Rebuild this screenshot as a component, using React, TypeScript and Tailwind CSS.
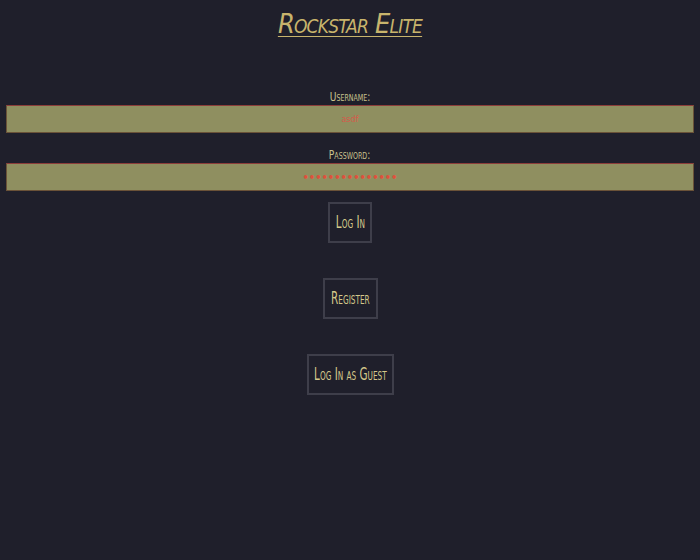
import React from "react";

const font = { fontFamily: '"Liberation Sans Narrow", "DejaVu Sans Condensed", "Roboto Condensed", "Liberation Sans", sans-serif' };

const btn =
  "h-[41px] flex items-center justify-center border-2 border-[#3e3e4a] text-[17px] text-[#d4c88a] [font-variant:small-caps] whitespace-nowrap";

function Btn({ w, children }: { w: string; children: React.ReactNode }) {
  return (
    <button className={`${btn} ${w}`}>
      <span className="inline-block scale-x-[0.68]">{children}</span>
    </button>
  );
}

export default function App() {
  return (
    <div className="w-[700px] h-[560px] bg-[#1f1f2b] flex flex-col items-center text-[#c9c28e]" style={font}>
      <h1 className="mt-[7px] text-[27px] leading-[34px] italic underline underline-offset-[3px] decoration-1 text-[#c8b46c] [font-variant:small-caps] tracking-[-0.8px]">
        Rockstar Elite
      </h1>
      <div className="mt-[49px] w-full flex flex-col items-center px-[6px]">
        <label className="text-[13px] leading-[14px] [font-variant:small-caps] inline-block scale-x-[0.78]">Username:</label>
        <input
          readOnly
          value="asdf"
          className="mt-[1px] w-full h-[28px] bg-[#8f8f60] border border-[#6a5238] border-t-[#8c3d3a] text-center text-[9px] text-[#d65a4a] outline-none"
        />
        <label className="mt-[15px] text-[13px] leading-[14px] [font-variant:small-caps] inline-block scale-x-[0.78]">Password:</label>
        <input
          readOnly
          type="password"
          value="passwordpasswor"
          className="mt-[1px] w-full h-[28px] bg-[#8f8f60] border border-[#6a5238] border-t-[#8c3d3a] text-center text-[11px] font-bold text-[#e0503c] outline-none"
        />
      </div>
      <div className="mt-[11px] flex flex-col items-center gap-[35px]">
        <Btn w="w-[44px]">Log In</Btn>
        <Btn w="w-[55px]">Register</Btn>
        <Btn w="w-[87px]">Log In as Guest</Btn>
      </div>
    </div>
  );
}
